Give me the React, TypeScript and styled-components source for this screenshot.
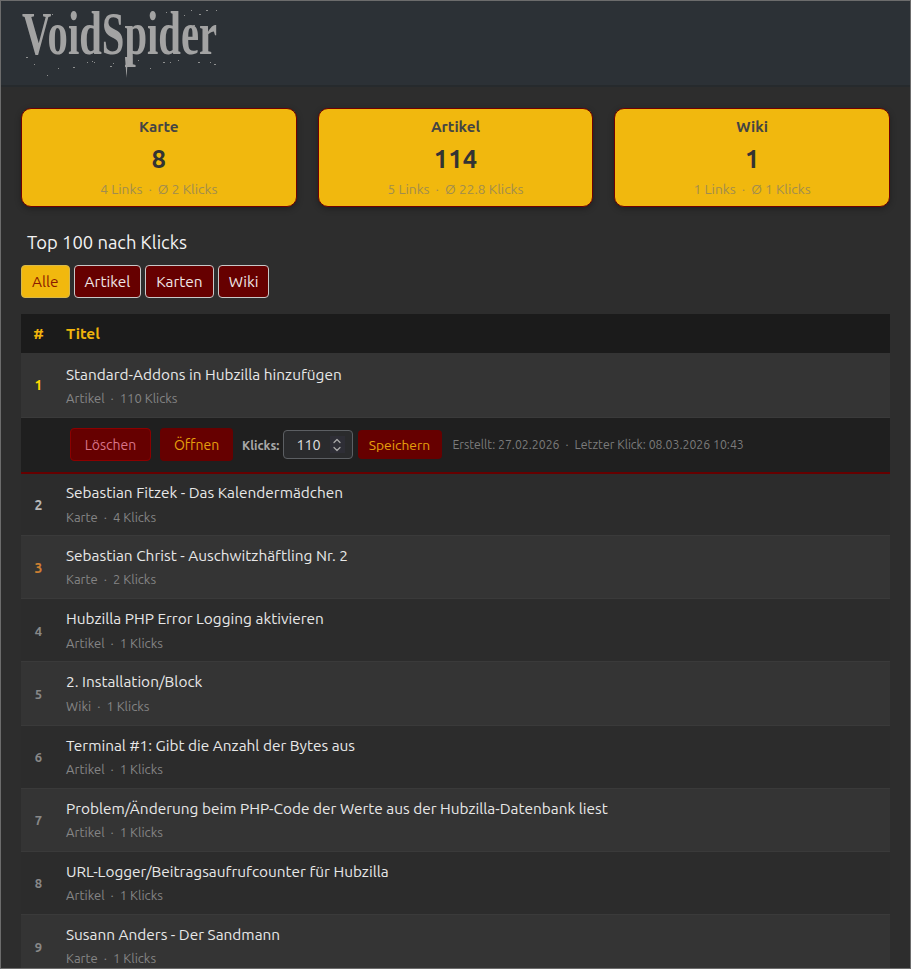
import React from "react";
import styled, { createGlobalStyle } from "styled-components";
import { ChevronUp, ChevronDown } from "lucide-react";

const FONT = `"Ubuntu", "Noto Sans", "Open Sans", sans-serif`;

const GlobalStyle = createGlobalStyle`
  html, body {
    margin: 0;
    padding: 0;
    background: #2d2d2d;
  }
  * {
    box-sizing: border-box;
  }
`;

const stats = [
  { title: "Karte", total: "8", meta: "4 Links", avg: "Ø 2 Klicks" },
  { title: "Artikel", total: "114", meta: "5 Links", avg: "Ø 22.8 Klicks" },
  { title: "Wiki", total: "1", meta: "1 Links", avg: "Ø 1 Klicks" },
];

const filters = ["Alle", "Artikel", "Karten", "Wiki"];

const rows = [
  { title: "Sebastian Fitzek - Das Kalendermädchen", type: "Karte", clicks: 4 },
  { title: "Sebastian Christ - Auschwitzhäftling Nr. 2", type: "Karte", clicks: 2 },
  { title: "Hubzilla PHP Error Logging aktivieren", type: "Artikel", clicks: 1 },
  { title: "2. Installation/Block", type: "Wiki", clicks: 1 },
  { title: "Terminal #1: Gibt die Anzahl der Bytes aus", type: "Artikel", clicks: 1 },
  { title: "Problem/Änderung beim PHP-Code der Werte aus der Hubzilla-Datenbank liest", type: "Artikel", clicks: 1 },
  { title: "URL-Logger/Beitragsaufrufcounter für Hubzilla", type: "Artikel", clicks: 1 },
  { title: "Susann Anders - Der Sandmann", type: "Karte", clicks: 1 },
];

// stray ink specks around the logo, in page pixels
const specks = [
  [26, 57], [34, 64], [58, 68], [73, 67], [87, 62], [94, 62], [110, 66], [113, 63], [138, 60],
  [163, 62], [170, 62], [178, 60], [198, 62], [210, 62], [191, 10], [206, 10], [216, 10],
  [184, 15], [199, 14], [52, 14], [166, 12], [193, 25], [47, 75], [150, 68], [214, 64], [92, 61],
];

const Logo = () => (
  <LogoSvg viewBox="0 0 200 72" aria-label="VoidSpider">
    <text
      x="1"
      y="47"
      textLength="195"
      lengthAdjust="spacingAndGlyphs"
      fontFamily='"Liberation Serif", "DejaVu Serif", serif'
      fontWeight="700"
      fontSize="62"
      fill="#a3a3a3"
    >
      VoidSpider
    </text>
    <path d="M104 50 L105.5 71 L107 50 Z" fill="#a3a3a3" />
    {specks.map(([x, y], i) => (
      <rect key={i} x={x - 21} y={y - 7} width={i % 3 === 0 ? 2 : 1} height="1" fill="#8f9090" />
    ))}
  </LogoSvg>
);

const App: React.FC = () => {
  return (
    <Frame>
      <GlobalStyle />
      <Header>
        <Logo />
      </Header>
      <Main>
        <StatGrid>
          {stats.map((s) => (
            <StatCard key={s.title}>
              <StatTitle>{s.title}</StatTitle>
              <StatValue>{s.total}</StatValue>
              <StatMeta>
                {s.meta}
                <Dot>·</Dot>
                {s.avg}
              </StatMeta>
            </StatCard>
          ))}
        </StatGrid>
        <Heading>Top 100 nach Klicks</Heading>
        <FilterBar>
          {filters.map((f, i) => (
            <FilterBtn key={f} $active={i === 0}>
              {f}
            </FilterBtn>
          ))}
        </FilterBar>
        <Table>
          <thead>
            <tr>
              <HeadCell $rank>#</HeadCell>
              <HeadCell>Titel</HeadCell>
            </tr>
          </thead>
          <tbody>
            <EntryRow $height={64} $striped>
              <RankCell $color="#ffd700" $big>1</RankCell>
              <TitleCell $first>
                <EntryTitle>Standard-Addons in Hubzilla hinzufügen</EntryTitle>
                <EntryMeta>
                  Artikel
                  <Dot>·</Dot>
                  110 Klicks
                </EntryMeta>
              </TitleCell>
            </EntryRow>
            <tr>
              <ActionCell colSpan={2}>
                <ActionBar>
                  <DeleteBtn>Löschen</DeleteBtn>
                  <OpenBtn>Öffnen</OpenBtn>
                  <ClicksLabel>Klicks:</ClicksLabel>
                  <NumberBox>
                    <NumberValue>110</NumberValue>
                    <Spinner>
                      <ChevronUp size={12} strokeWidth={2.5} />
                      <ChevronDown size={12} strokeWidth={2.5} />
                    </Spinner>
                  </NumberBox>
                  <SaveBtn>Speichern</SaveBtn>
                  <Dates>
                    Erstellt: 27.02.2026
                    <Dot>·</Dot>
                    Letzter Klick: 08.03.2026 10:43
                  </Dates>
                </ActionBar>
              </ActionCell>
            </tr>
            {rows.map((r, i) => (
              <EntryRow key={r.title} $height={63.14} $striped={i % 2 === 1}>
                <RankCell
                  $color={i === 0 ? "#b8b8b8" : i === 1 ? "#cd7f32" : "#888888"}
                  $big={i < 2}
                >
                  {i + 2}
                </RankCell>
                <TitleCell>
                  <EntryTitle>{r.title}</EntryTitle>
                  <EntryMeta>
                    {r.type}
                    <Dot>·</Dot>
                    {r.clicks} Klicks
                  </EntryMeta>
                </TitleCell>
              </EntryRow>
            ))}
          </tbody>
        </Table>
      </Main>
    </Frame>
  );
};

const Frame = styled.div`
  height: 100vh;
  overflow: hidden;
  border: 1px solid #6c6c6c;
  background: #2d2d2d;
  font-family: ${FONT};
  color: #e6e6e6;
`;

const Header = styled.header`
  height: 86px;
  padding: 6px 0 0 20px;
  background: #2c3136;
  border-bottom: 2px solid #262a2d;
`;

const LogoSvg = styled.svg`
  display: block;
  width: 200px;
  height: 72px;
  overflow: visible;
`;

const Main = styled.main`
  padding: 21px 20px 0;
`;

const StatGrid = styled.div`
  display: grid;
  grid-template-columns: repeat(3, 1fr);
  gap: 21px;
`;

const StatCard = styled.div`
  height: 99px;
  padding-top: 9px;
  text-align: center;
  background: #f1b80e;
  border: 1px solid #700000;
  border-radius: 10px;
  box-shadow: 0 2px 6px rgba(0, 0, 0, 0.3);
`;

const StatTitle = styled.div`
  font-size: 15.2px;
  font-weight: 700;
  line-height: 17px;
  color: #444444;
`;

const StatValue = styled.div`
  margin-top: 9px;
  font-size: 25.6px;
  font-weight: 700;
  line-height: 30px;
  color: #333333;
`;

const StatMeta = styled.div`
  margin-top: 7px;
  font-size: 13.8px;
  line-height: 16px;
  color: #a08c50;
`;

const Dot = styled.span`
  margin: 0 6px;
`;

const Heading = styled.h2`
  margin: 24px 0 0 6px;
  font-size: 18.4px;
  font-weight: 400;
  line-height: 22px;
  color: #f4f4f4;
`;

const FilterBar = styled.div`
  display: flex;
  gap: 4px;
  margin-top: 12px;
`;

const FilterBtn = styled.button<{ $active?: boolean }>`
  height: 33px;
  padding: 0 10px;
  font-family: ${FONT};
  font-size: 15.4px;
  border: 1px solid ${(p) => (p.$active ? "#d8b84a" : "#c8c8c8")};
  border-radius: 4px;
  background: ${(p) => (p.$active ? "#f1b80e" : "#660000")};
  color: ${(p) => (p.$active ? "#8b1a00" : "#f0e6e6")};
`;

const Table = styled.table`
  width: 100%;
  margin-top: 16px;
  border-collapse: collapse;
`;

const HeadCell = styled.th<{ $rank?: boolean }>`
  height: 39px;
  padding: ${(p) => (p.$rank ? "0 10px 0 0" : "0")};
  width: ${(p) => (p.$rank ? "45px" : "auto")};
  text-align: ${(p) => (p.$rank ? "center" : "left")};
  font-size: 15.4px;
  font-weight: 700;
  color: #f0b40c;
  background: #1b1b1b;
`;

const EntryRow = styled.tr<{ $height: number; $striped?: boolean }>`
  height: ${(p) => p.$height}px;
  background: ${(p) => (p.$striped ? "#343434" : "#2c2c2c")};
  border-bottom: 1px solid #3a3a3a;
`;

const RankCell = styled.td<{ $color: string; $big?: boolean }>`
  padding: 1px 10px 0 0;
  text-align: center;
  font-size: ${(p) => (p.$big ? "14px" : "13px")};
  font-weight: 700;
  color: ${(p) => p.$color};
`;

const TitleCell = styled.td<{ $first?: boolean }>`
  padding: ${(p) => (p.$first ? "2px 0 0" : "0")};
`;

const EntryTitle = styled.div`
  font-size: 15.4px;
  line-height: 18px;
  color: #e8e8e8;
`;

const EntryMeta = styled.div`
  margin-top: 6.3px;
  font-size: 13px;
  line-height: 16px;
  color: #858585;
`;

const ActionCell = styled.td`
  height: 55.6px;
  padding: 0 0 0 49px;
  background: #1f1f1f;
  border-bottom: 2px solid #660000;
`;

const ActionBar = styled.div`
  display: flex;
  align-items: center;
  font-size: 13px;
`;

const ActionBtn = styled.button`
  font-family: ${FONT};
  font-size: 14px;
  background: #660000;
  border-radius: 4px;
  padding: 0;
`;

const DeleteBtn = styled(ActionBtn)`
  width: 81px;
  height: 33px;
  color: #d9748a;
  border: 1px solid #8b0000;
`;

const OpenBtn = styled(ActionBtn)`
  width: 73px;
  height: 33px;
  margin-left: 9px;
  color: #e6a00c;
  border: none;
`;

const ClicksLabel = styled.span`
  margin-left: 9px;
  font-size: 12.4px;
  font-weight: 700;
  color: #a8a8a8;
`;

const NumberBox = styled.div`
  display: flex;
  align-items: center;
  width: 70px;
  height: 29px;
  margin-left: 4px;
  padding-left: 12px;
  background: #2a2b2d;
  border: 1px solid #5c5f63;
  border-radius: 4px;
`;

const NumberValue = styled.span`
  font-size: 14.4px;
  color: #e0e0e0;
`;

const Spinner = styled.span`
  display: flex;
  flex-direction: column;
  align-items: center;
  justify-content: center;
  width: 15px;
  height: 17px;
  margin-left: 9px;
  color: #a8a8a8;
  background: #2e2e36;

  svg {
    margin: -2px 0;
  }
`;

const SaveBtn = styled(ActionBtn)`
  width: 84px;
  height: 29px;
  margin-left: 5px;
  padding-right: 2px;
  font-size: 13.8px;
  color: #e6a00c;
  border: none;
`;

const Dates = styled.span`
  margin-left: 10px;
  font-size: 12.3px;
  color: #7c7c7c;
`;

export default App;
